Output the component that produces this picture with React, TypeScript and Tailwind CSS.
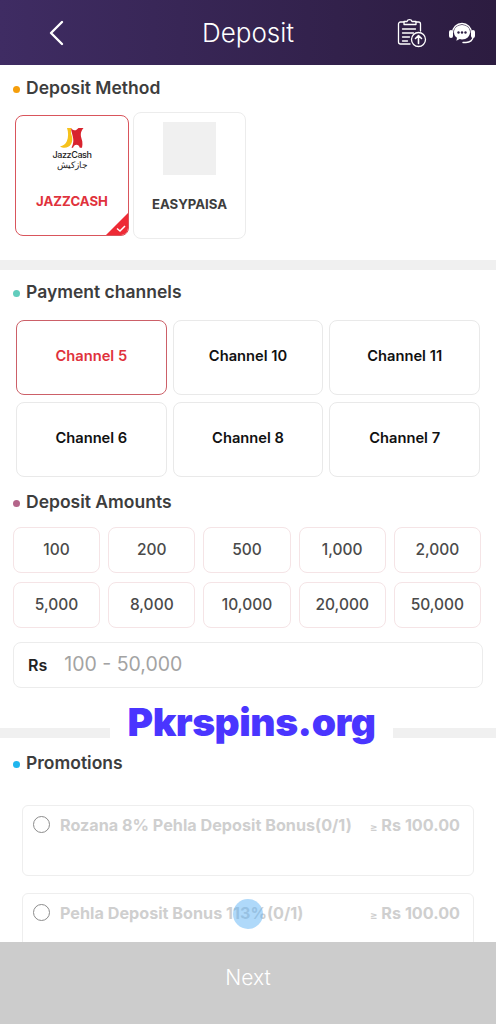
const font = "font-['Inter','Noto_Sans','Noto_Sans_CJK_SC',sans-serif]"

const channels = ["Channel 5", "Channel 10", "Channel 11", "Channel 6", "Channel 8", "Channel 7"]
const amounts = ["100", "200", "500", "1,000", "2,000", "5,000", "8,000", "10,000", "20,000", "50,000"]
const promos = [
  { name: "Rozana 8% Pehla Deposit Bonus(0/1)", min: "Rs 100.00" },
  { name: "Pehla Deposit Bonus 113%(0/1)", min: "Rs 100.00" },
]

function SectionTitle({ title, dot }: { title: string; dot: string }) {
  return (
    <div className="flex items-center h-6 pl-[13px]">
      <span className={`w-[7px] h-[7px] rounded-full ${dot}`}></span>
      <p className="ml-[6px] pb-[2px] text-[17.5px] font-semibold text-[#3d3d3d]">{title}</p>
    </div>
  )
}

function ClipboardUp() {
  return (
    <svg width="31" height="31" viewBox="0 0 31 31" fill="none" stroke="#fff" strokeWidth="1.3" strokeLinecap="round" strokeLinejoin="round">
      <path d="M8 5H4.500a2 2 0 0 0-2 2v18a2 2 0 0 0 2 2H14" />
      <path d="M20 5h2.500a2 2 0 0 1 2 2v7" />
      <path d="M8 7.500V4.500h3a2.600 2.600 0 0 1 5 0h4v3z" />
      <path d="M6.500 12h13M6.500 16h11M6.500 20h7M6.500 24h5" />
      <circle cx="22.500" cy="22.500" r="7" />
      <path d="M22.500 26.500v-7.500M19.500 21.500l3-3 3 3" strokeWidth="1.6" />
    </svg>
  )
}

function Support() {
  return (
    <svg width="28" height="24" viewBox="0 0 28 24" fill="none">
      <path d="M4.500 12a9.500 9.500 0 0 1 19 0" stroke="#fff" strokeWidth="1.4" />
      <rect x="1" y="9" width="4" height="8" rx="2" fill="#fff" />
      <rect x="23" y="9" width="4" height="8" rx="2" fill="#fff" />
      <path d="M25 16c0 3-3 5.500-7 5.500h-3" stroke="#fff" strokeWidth="1.4" strokeLinecap="round" />
      <path d="M14 4c-4.600 0-8 3-8 7.200 0 2.400 1.100 4.300 3 5.600l-.6 3 3.300-1.700c.7.200 1.500.3 2.300.3 4.600 0 8-3.100 8-7.200S18.600 4 14 4z" fill="#fff" />
      <circle cx="10.500" cy="11.500" r="1.200" fill="#2f2045" />
      <circle cx="14" cy="11.500" r="1.200" fill="#2f2045" />
      <circle cx="17.500" cy="11.500" r="1.200" fill="#2f2045" />
    </svg>
  )
}

function JazzLogo() {
  return (
    <svg width="24" height="20" viewBox="0 0 24 20">
      <path d="M7 0h4.500c-.8 2.500-.7 5 .2 7.500 1 3 .8 6-.6 8.500-1.500 2.500-3.800 3.800-6.600 3.800C3 19.800 1.200 19.400 0 18.500c3-.5 5.500-2.400 6.800-5.200C8.500 9.500 8.500 4 7 0z" fill="#f6c21c" />
      <path d="M10.500 0c1.300.4 1.800 2 3.500 2.300 2 .4 3.300-1 4.500-2.300h5c-1.300 1.500-2.500 3.500-2.700 6-.2 2.500 1 5 1.500 7.500.3 2 .2 4.200-.3 6.200h-2.200c-.6-1.800-1.600-3-3.300-3-1.700 0-2.800 1.200-3.500 3h-1.500c1.400-3 2.200-6 1.700-9-.5-3.500-2-7.200-2.200-10.700z" fill="#d8232e" />
    </svg>
  )
}

export default function App() {
  return (
    <div className={`${font} relative w-[496px] h-[1024px] overflow-hidden bg-white`}>
      <header className="h-[65px] bg-gradient-to-r from-[#3f2c63] to-[#2c1c40] flex items-center pl-[46px] pr-[20px]">
        <svg width="22" height="28" viewBox="0 0 22 28" fill="none" stroke="#fff" strokeWidth="2.400" strokeLinecap="round" strokeLinejoin="round">
          <path d="M16 3 5 14l11 11" />
        </svg>
        <h1 className="flex-1 text-center text-[26px] font-light text-white pl-[32px]">Deposit</h1>
        <div className="flex items-center gap-[21px]">
          <ClipboardUp />
          <Support />
        </div>
      </header>

      <section className="pt-[12px]">
        <SectionTitle title="Deposit Method" dot="bg-[#f59e0b]" />
        <div className="flex items-center pl-[15px] gap-[4px] mt-[11px] h-[127px]">
          <button className="relative w-[114px] h-[121px] border-[1.5px] border-[#d9555c] rounded-lg flex flex-col items-center overflow-hidden">
            <div className="mt-[12px]"><JazzLogo /></div>
            <p className="mt-[2px] text-[9px] leading-[10px] font-medium text-[#222] tracking-[-0.4px]">JazzCash</p>
            <p className="text-[9px] leading-[9px] text-[#222]">جازکیش</p>
            <p className="mt-[23px] text-[13.2px] font-bold text-[#e0323c]">JAZZCASH</p>
            <svg className="absolute right-0 bottom-0" width="22" height="22" viewBox="0 0 22 22">
              <path d="M22 0v22H0z" fill="#ee2a35" />
              <path d="M11 15.500l3 2.500 5-5" fill="none" stroke="#fff" strokeWidth="1.500" />
            </svg>
          </button>
          <button className="w-[113px] h-[127px] border border-[#ececec] rounded-lg flex flex-col items-center">
            <div className="mt-[9px] w-[53px] h-[53px] bg-[#f0f0f0]"></div>
            <p className="mt-[20px] text-[13.2px] font-bold text-[#3d3d3d]">EASYPAISA</p>
          </button>
        </div>
      </section>

      <div className="h-[10px] bg-[#f0f0f0] mt-[21px]"></div>

      <section className="pt-[11px]">
        <SectionTitle title="Payment channels" dot="bg-[#62cdbd]" />
        <div className="grid grid-cols-3 gap-x-[6px] gap-y-[7px] pl-[16px] pr-[16px] mt-[15px]">
          {channels.map((channel, index) => (
            <button
              key={index}
              className={`h-[75px] pb-[2px] rounded-lg text-[14.700px] font-semibold ${index === 0 ? "border-[1.5px] border-[#cc6068] text-[#e0323c]" : "border border-[#e9e9e9] text-[#111]"}`}
            >
              {channel}
            </button>
          ))}
        </div>
      </section>

      <section className="pt-[14px]">
        <SectionTitle title="Deposit Amounts" dot="bg-[#b4658a]" />
        <div className="grid grid-cols-5 gap-x-[8px] gap-y-[9px] pl-[13px] pr-[15px] mt-[12px]">
          {amounts.map((amount) => (
            <button key={amount} className="h-[46px] rounded-lg border border-[#f5e4e6] text-[15.500px] font-medium text-[#4a4a4a]">
              {amount}
            </button>
          ))}
        </div>
        <div className="flex items-center h-[46px] mx-[13px] mt-[14px] rounded-lg border border-[#ececec]">
          <span className="ml-[14px] text-[16px] font-semibold text-[#222]">Rs</span>
          <span className="ml-[17px] text-[19.500px] text-[#a3a3a3]">100 - 50,000</span>
        </div>
      </section>

      <div className="h-[10px] bg-[#f0f0f0] mt-[40px]"></div>

      <section className="pt-[14px]">
        <SectionTitle title="Promotions" dot="bg-[#1fb6ee]" />
        <div className="flex flex-col gap-[17px] mx-[22px] mt-[29px]">
          {promos.map((promo) => (
            <div key={promo.name} className="h-[71px] rounded-md border border-[#eeeeee] flex items-start pl-[10px] pr-[13px] pt-[10px]">
              <span className="w-[17px] h-[17px] rounded-full border-[1.5px] border-[#8c8c8c] shrink-0"></span>
              <p className="ml-[10px] flex-1 text-[16.200px] leading-[18px] font-bold text-[#cfcfcf] whitespace-nowrap">{promo.name}</p>
              <p className="text-[16.200px] leading-[18px] font-bold text-[#cfcfcf] whitespace-nowrap"><span className="text-[11px]">≥</span> {promo.min}</p>
            </div>
          ))}
        </div>
      </section>

      {/* overlays */}
      <div className="absolute left-[110px] top-[696px] w-[283px] h-[50px] bg-white flex items-center justify-center">
        <span className="text-[39px] font-black text-[#4a35ff] tracking-[-0.5px] leading-none">Pkrspins.org</span>
      </div>
      <div className="absolute left-[233px] top-[899px] w-[30px] h-[30px] rounded-full bg-[#5fb4f5]/50"></div>
      <div className="absolute left-0 bottom-0 w-full h-[82px] bg-[#cccccc] flex justify-center pt-[21px]">
        <span className="text-[21px] font-light text-white leading-[30px]">Next</span>
      </div>
    </div>
  )
}
